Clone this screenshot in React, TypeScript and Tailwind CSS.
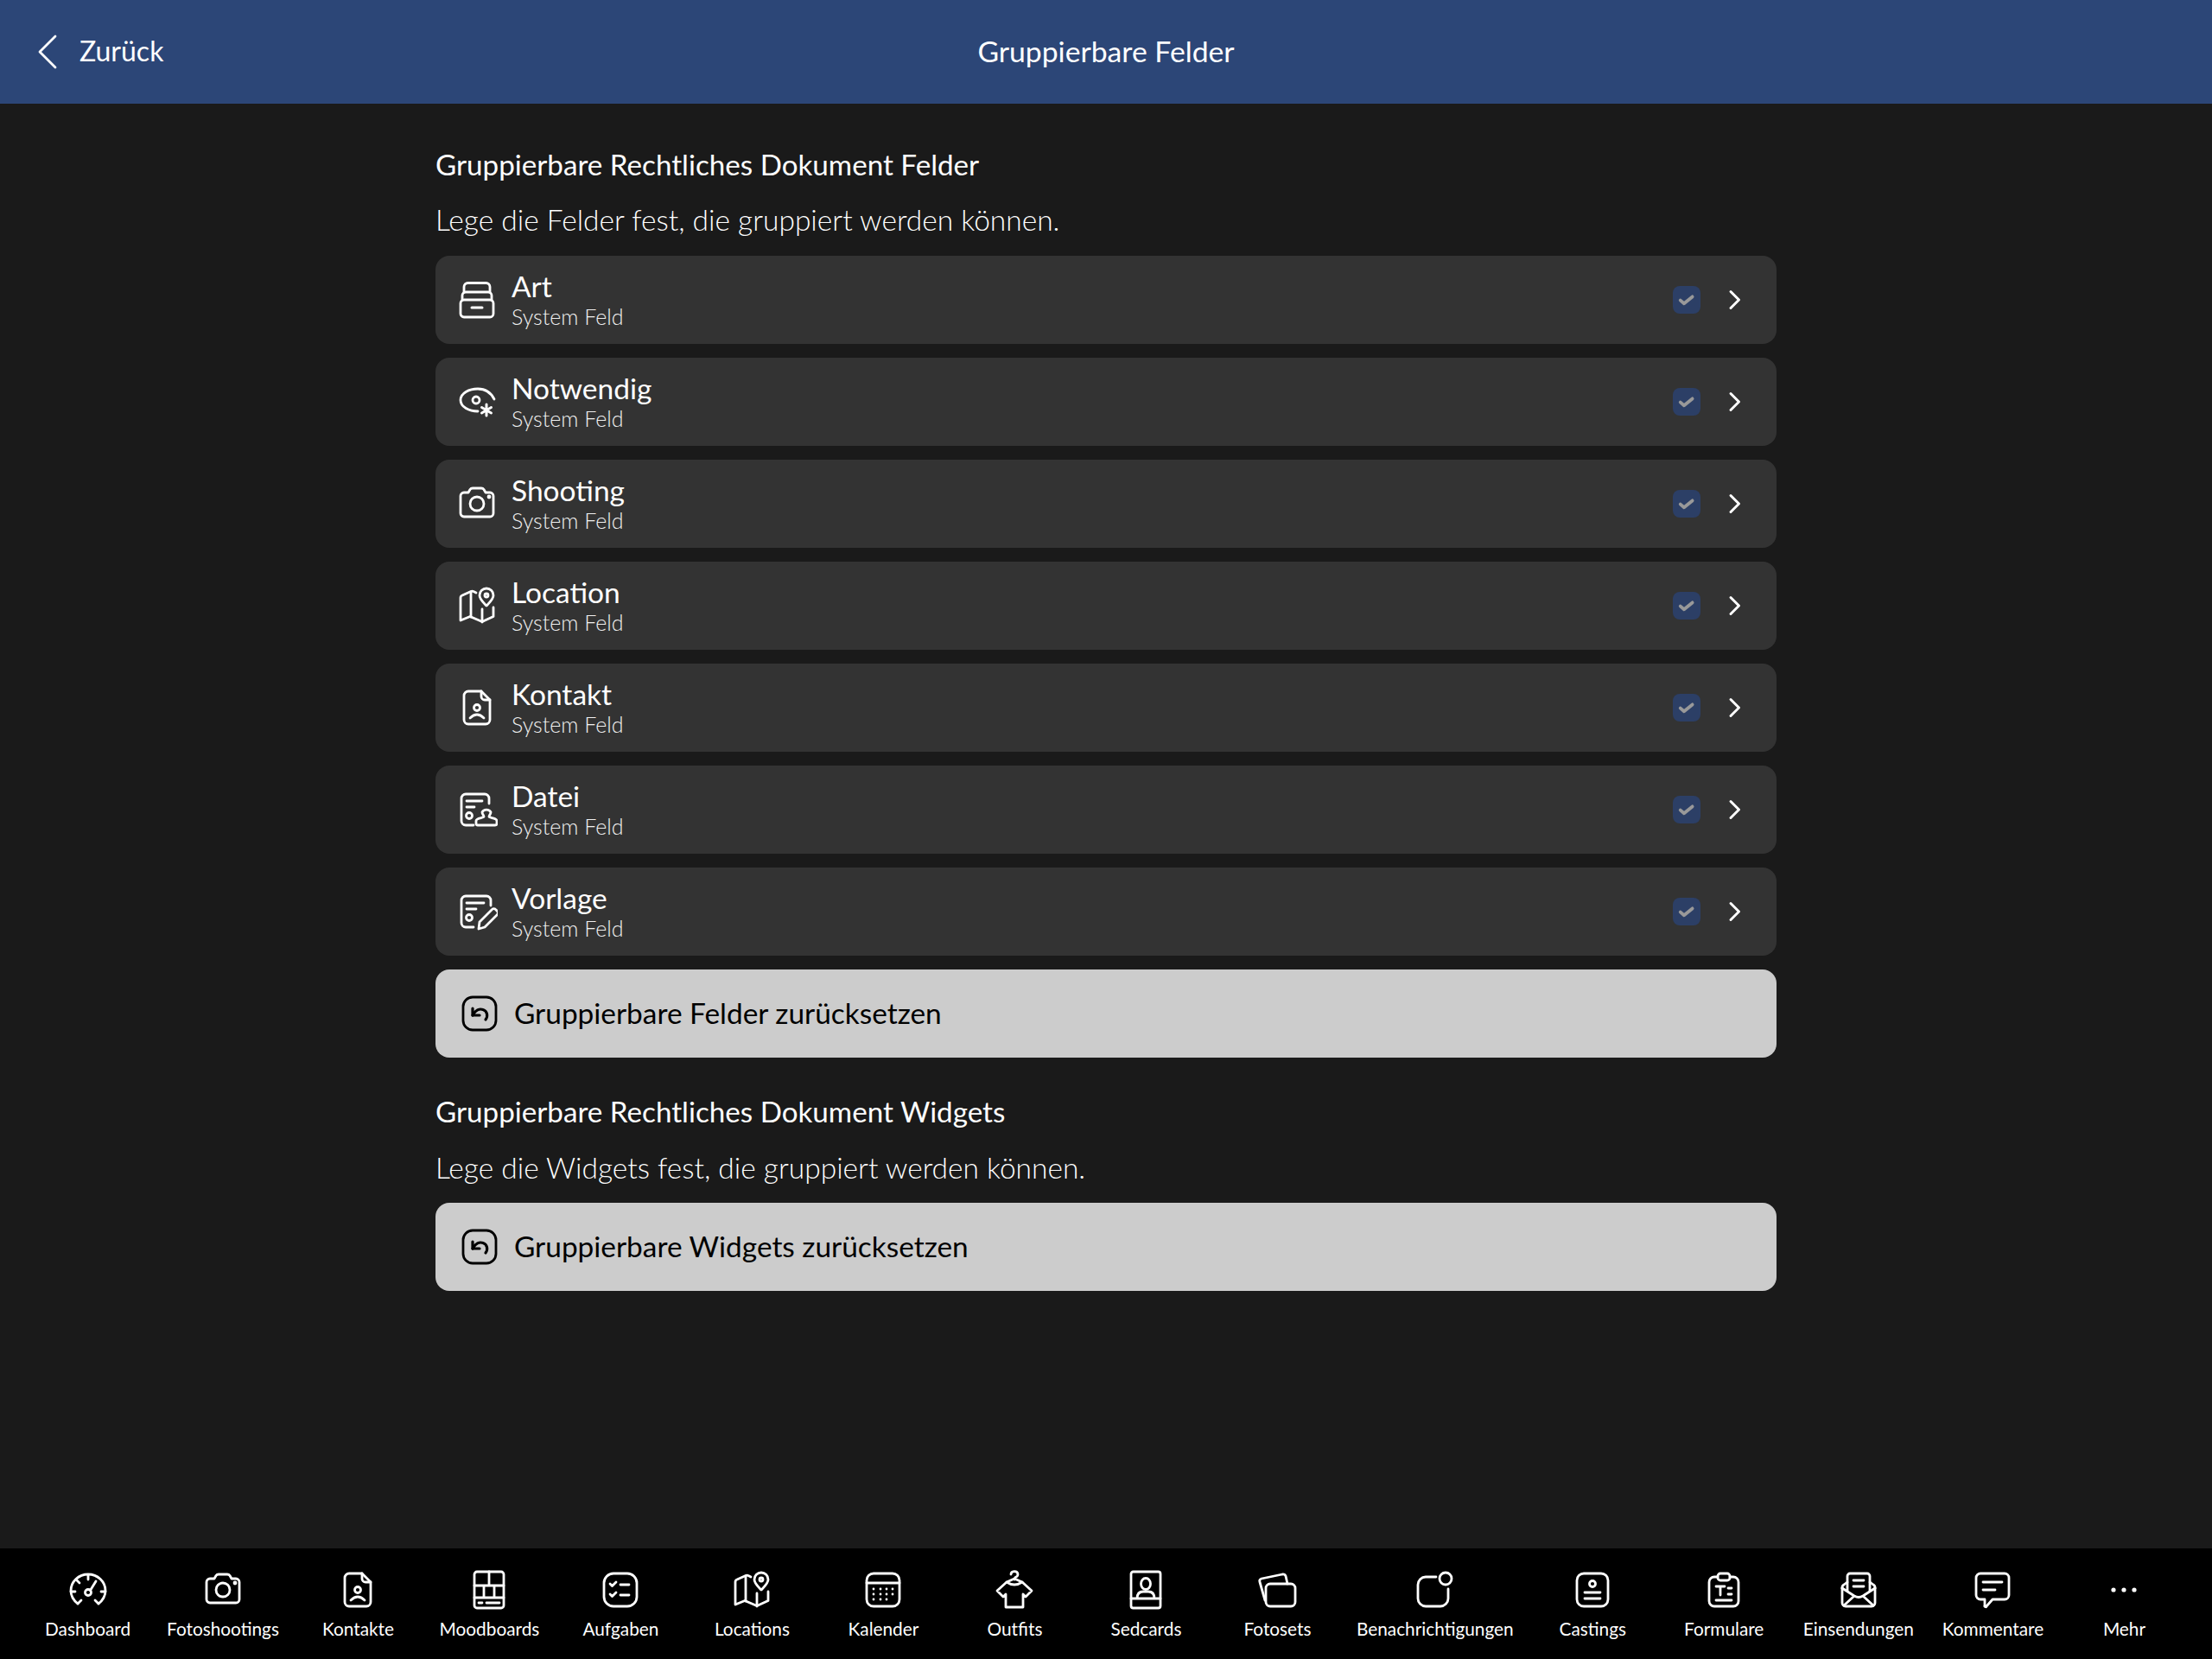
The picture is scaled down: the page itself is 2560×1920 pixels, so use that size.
import type { ReactNode } from "react";

const font = "font-['Lato','Noto_Sans',sans-serif]";

function Icon({ children, className }: { children: ReactNode; className?: string }) {
  return (
    <svg
      viewBox="0 0 48 48"
      fill="none"
      stroke="currentColor"
      strokeWidth="2.8"
      strokeLinecap="round"
      strokeLinejoin="round"
      className={className ?? "w-12 h-12 shrink-0"}
    >
      {children}
    </svg>
  );
}

const icons: Record<string, ReactNode> = {
  art: (
    <>
      <path d="M9 15V9a4.500 4.500 0 0 1 4.500-4.500h21A4.500 4.500 0 0 1 39 9v6" />
      <path d="M7 24v-5a4 4 0 0 1 4-4h26a4 4 0 0 1 4 4v5" />
      <rect x="5" y="24" width="38" height="20" rx="4" />
      <path d="M18 33h12" strokeWidth="3" />
    </>
  ),
  eye: (
    <>
      <path d="M25 35C15 35 5 30 5 22C5 14 15 9 25 9C33 9 40 13 44 21" />
      <circle cx="23" cy="22" r="4" />
      <path d="M35 27v13M29.500 30.500l11 6.500M40.500 30.500l-11 6.500" strokeWidth="3" />
    </>
  ),
  camera: (
    <>
      <path d="M9 11h5l2-3.500Q17 6 19 6h10q2 0 3 1.500L34 11h5a4 4 0 0 1 4 4v20a4 4 0 0 1-4 4H9a4 4 0 0 1-4-4V15a4 4 0 0 1 4-4z" />
      <circle cx="24" cy="24" r="8" />
      <circle cx="38" cy="16" r="1" fill="currentColor" />
    </>
  ),
  map: (
    <>
      <path d="M23 9l-3-1.500a3 3 0 0 0-3 0L7 12a3 3 0 0 0-2 3v26l11-4.500 14 6 13-6V26" />
      <path d="M17 8v29M30 28v15" />
      <path d="M35 24c-4-4-8-7.500-8-12a8 8 0 0 1 16 0c0 4.500-4 8-8 12z" />
      <circle cx="35" cy="12" r="2" />
    </>
  ),
  contact: (
    <>
      <path d="M14 5h15l10 10v23a5 5 0 0 1-5 5H14a5 5 0 0 1-5-5V10a5 5 0 0 1 5-5z" />
      <path d="M29 5v6a4 4 0 0 0 4 4h6" />
      <circle cx="24" cy="24" r="3.500" />
      <path d="M16 36q8-8 16 0" />
    </>
  ),
  datei: (
    <>
      <path d="M38 17v-6a5 5 0 0 0-5-5H11a5 5 0 0 0-5 5v26a5 5 0 0 0 5 5h9" />
      <path d="M12 14h18M12 21h9" />
      <circle cx="15" cy="31" r="3.500" />
      <path d="M30 27a5.500 5 0 0 1 10 0c0 2-1.500 3-2 5 0 2 9 1 9 5v3a2 2 0 0 1-2 2H25a2 2 0 0 1-2-2v-3c0-4 9-3 9-5-.5-2-2-3-2-5z" />
    </>
  ),
  vorlage: (
    <>
      <path d="M40 17v-6a5 5 0 0 0-5-5H11a5 5 0 0 0-5 5v26a5 5 0 0 0 5 5h9" />
      <path d="M12 14h20M12 21h11" />
      <circle cx="15" cy="31" r="3.500" />
      <path d="M26 44l1-8 14-14a3 3 0 0 1 5 0l1 1a3 3 0 0 1 0 5L33 42z" />
    </>
  ),
  reset: (
    <>
      <rect x="5" y="5" width="38" height="38" rx="11" />
      <path d="M16 18v8h8" strokeWidth="3.200" />
      <path d="M16 26C19 20 24 18 28 19.500C33 21 34 27 31 31" strokeWidth="3.200" />
    </>
  ),
  dashboard: (
    <>
      <path d="M12 40C7 36 4 31 4 25A20 19 0 0 1 44 25C44 31 41 36 36 40" />
      <path d="M12 40l4-4M36 40l-4-4M24 7v5M11 13l3 3M4 26h5M44 26h-5" />
      <circle cx="24" cy="27" r="3.500" />
      <path d="M26.500 24.500L33 14" />
    </>
  ),
  moodboard: (
    <>
      <rect x="7" y="3" width="34" height="42" rx="3" />
      <path d="M7 19h34M24 3v16M7 33h34M18 19v14M30 19v14M12 39h4M21 39h15" />
    </>
  ),
  tasks: (
    <>
      <rect x="5" y="5" width="38" height="38" rx="11" />
      <path d="M12 17l2.500 2.500L19 15M12 29l2.500 2.500L19 27M24 18h10M24 30h10" />
    </>
  ),
  calendar: (
    <>
      <rect x="5" y="5" width="38" height="38" rx="8" />
      <path d="M5 16h38" />
      <g fill="currentColor" stroke="none">
        {[13, 21, 28, 35].map((x) =>
          [23, 29, 35].map((y) =>
            x === 35 && y === 35 ? null : <circle key={`${x}-${y}`} cx={x} cy={y} r="1.400" />,
          ),
        )}
      </g>
    </>
  ),
  outfit: (
    <>
      <path d="M15 15L4 25l7 7 3-3v15h20V29l3 3 7-7-11-10" />
      <path d="M15 15l9-4 9 4q-9 6-18 0z" />
      <path d="M20 6a4 3.500 0 1 1 5 3.500L24 12" />
    </>
  ),
  sedcard: (
    <>
      <rect x="7" y="3" width="34" height="42" rx="2.500" />
      <ellipse cx="24" cy="17" rx="5.500" ry="6.500" />
      <path d="M14 34q0-8 7-8h6q7 0 7 8M7 34h34" />
    </>
  ),
  fotosets: (
    <>
      <path d="M10 36L4 15q-1-3 2-4l24-5q3-.5 4 2l2 9" />
      <rect x="11" y="17" width="34" height="26" rx="5" />
    </>
  ),
  bell: (
    <>
      <path d="M25 9H13a9 9 0 0 0-9 9v16a9 9 0 0 0 9 9h17a9 9 0 0 0 9-9V23" />
      <circle cx="36" cy="11" r="7" />
    </>
  ),
  casting: (
    <>
      <rect x="6" y="5" width="36" height="38" rx="8" />
      <circle cx="24" cy="17" r="3.500" />
      <path d="M15 27h18M15 34h18" />
    </>
  ),
  form: (
    <>
      <path d="M17 9h-4a6 6 0 0 0-6 6v22a6 6 0 0 0 6 6h22a6 6 0 0 0 6-6V15a6 6 0 0 0-6-6h-4" />
      <rect x="17" y="5" width="14" height="8" rx="3" />
      <path d="M15 20h10M20 20v10M29 22h4M29 29h4M15 36h18" />
    </>
  ),
  mail: (
    <>
      <path d="M5 22v17a4 4 0 0 0 4 4h30a4 4 0 0 0 4-4V22" />
      <path d="M11 15l-4 3a4 4 0 0 0-2 4M37 15l4 3a4 4 0 0 1 2 4" />
      <path d="M5 22l14 9q5 3 10 0l14-9M7 42l12-11M41 42L29 31" />
      <path d="M11 25V8a3 3 0 0 1 3-3h20a3 3 0 0 1 3 3v17" />
      <path d="M18 13h12M18 20h12" />
    </>
  ),
  comment: (
    <>
      <path d="M10 5h28a5 5 0 0 1 5 5v20a5 5 0 0 1-5 5H24l-7 8a1 1 0 0 1-2-1v-7h-5a5 5 0 0 1-5-5V10a5 5 0 0 1 5-5z" />
      <path d="M13 15h22M13 24h14" />
    </>
  ),
  more: (
    <g fill="currentColor" stroke="none">
      <circle cx="12" cy="24" r="2.600" />
      <circle cx="24" cy="24" r="2.600" />
      <circle cx="36" cy="24" r="2.600" />
    </g>
  ),
};

const fields = [
  { name: "Art", icon: "art" },
  { name: "Notwendig", icon: "eye" },
  { name: "Shooting", icon: "camera" },
  { name: "Location", icon: "map" },
  { name: "Kontakt", icon: "contact" },
  { name: "Datei", icon: "datei" },
  { name: "Vorlage", icon: "vorlage" },
];

const tabs = [
  { label: "Dashboard", icon: "dashboard" },
  { label: "Fotoshootings", icon: "camera" },
  { label: "Kontakte", icon: "contact" },
  { label: "Moodboards", icon: "moodboard" },
  { label: "Aufgaben", icon: "tasks" },
  { label: "Locations", icon: "map" },
  { label: "Kalender", icon: "calendar" },
  { label: "Outfits", icon: "outfit" },
  { label: "Sedcards", icon: "sedcard" },
  { label: "Fotosets", icon: "fotosets" },
  { label: "Benachrichtigungen", icon: "bell" },
  { label: "Castings", icon: "casting" },
  { label: "Formulare", icon: "form" },
  { label: "Einsendungen", icon: "mail" },
  { label: "Kommentare", icon: "comment" },
  { label: "Mehr", icon: "more" },
];

function FieldRow({ name, icon }: { name: string; icon: string }) {
  return (
    <div className="flex h-[102px] items-center rounded-[16px] bg-[#333333] pl-6 pr-[40px]">
      <Icon>{icons[icon]}</Icon>
      <div className="ml-4 flex flex-1 flex-col pb-[3px]">
        <span className="text-[33.5px] leading-[40px] text-white">{name}</span>
        <span className="text-[25px] leading-[30px] font-light text-[#f0f0f0]">System Feld</span>
      </div>
      <div className="flex h-8 w-8 items-center justify-center rounded-[8px] bg-[#2c3f66]">
        <svg viewBox="0 0 20 20" className="h-6 w-6" fill="none" stroke="#999999" strokeWidth="3.200" strokeLinecap="round" strokeLinejoin="round">
          <path d="M4 10.500l3.500 3 8-6.500" />
        </svg>
      </div>
      <svg viewBox="0 0 16 24" className="ml-[32px] h-6 w-4" fill="none" stroke="white" strokeWidth="3" strokeLinecap="round" strokeLinejoin="round">
        <path d="M3 2.500l9.500 9.500L3 21.500" />
      </svg>
    </div>
  );
}

function ResetButton({ label }: { label: string }) {
  return (
    <div className="flex h-[102px] items-center rounded-[16px] bg-[#cccccc] pl-[27px] text-[#000000]">
      <Icon>{icons.reset}</Icon>
      <span className="ml-[16px] pb-[3px] text-[33.4px] leading-10">{label}</span>
    </div>
  );
}

export default function App() {
  return (
    <div className={`${font} flex h-[1920px] w-[2560px] flex-col bg-[#1a1a1a] text-white`}>
      <header className="relative flex h-[120px] items-center justify-center bg-[#2c4677]">
        <div className="absolute left-[40px] flex items-center">
          <svg viewBox="0 0 28 40" className="h-10 w-7" fill="none" stroke="white" strokeWidth="2.8" strokeLinecap="round" strokeLinejoin="round">
            <path d="M24 2L6 20l18 18" />
          </svg>
          <span className="ml-[24px] pb-[2px] text-[32px] leading-10">Zurück</span>
        </div>
        <h1 className="pb-[3px] text-[33.7px] leading-10">Gruppierbare Felder</h1>
      </header>

      <main className="mx-auto w-[1552px] flex-1">
        <h2 className="mt-[50px] text-[33.2px] leading-[40px]">
          Gruppierbare Rechtliches Dokument Felder
        </h2>
        <p className="mt-[24px] mb-[22px] text-[33.5px] leading-[40px] font-light">
          Lege die Felder fest, die gruppiert werden können.
        </p>
        <div className="flex flex-col gap-4">
          {fields.map((f) => (
            <FieldRow key={f.name} name={f.name} icon={f.icon} />
          ))}
          <ResetButton label="Gruppierbare Felder zurücksetzen" />
        </div>
        <h2 className="mt-[42px] text-[33.2px] leading-[40px]">
          Gruppierbare Rechtliches Dokument Widgets
        </h2>
        <p className="mt-[25px] mb-[21px] text-[33.5px] leading-[40px] font-light">
          Lege die Widgets fest, die gruppiert werden können.
        </p>
        <ResetButton label="Gruppierbare Widgets zurücksetzen" />
      </main>

      <nav className="flex h-[128px] items-start justify-center bg-black pt-6">
        {tabs.map((t) => (
          <div key={t.label} className="flex min-w-[152px] flex-col items-center px-[15.5px]">
            <Icon>{icons[t.icon]}</Icon>
            <span className="mt-[8px] text-[20.8px] leading-[26px] whitespace-nowrap">{t.label}</span>
          </div>
        ))}
      </nav>
    </div>
  );
}
